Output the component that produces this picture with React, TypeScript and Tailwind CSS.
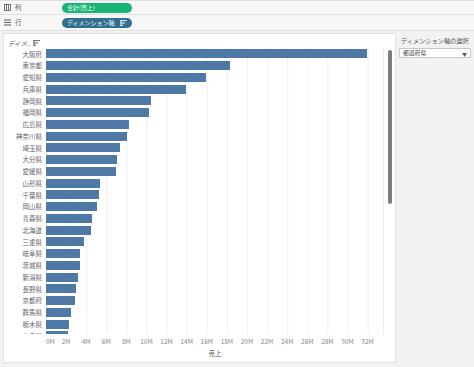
const rows: { name: string; end: number }[] = [
  { name: "大阪府", end: 366 },
  { name: "東京都", end: 229 },
  { name: "愛知県", end: 205 },
  { name: "兵庫県", end: 185 },
  { name: "静岡県", end: 150 },
  { name: "福岡県", end: 148 },
  { name: "広島県", end: 128 },
  { name: "神奈川県", end: 126 },
  { name: "埼玉県", end: 119 },
  { name: "大分県", end: 116 },
  { name: "愛媛県", end: 115 },
  { name: "山形県", end: 99 },
  { name: "千葉県", end: 98 },
  { name: "岡山県", end: 96 },
  { name: "青森県", end: 91 },
  { name: "北海道", end: 90 },
  { name: "三重県", end: 83 },
  { name: "岐阜県", end: 79 },
  { name: "茨城県", end: 79 },
  { name: "新潟県", end: 77 },
  { name: "長野県", end: 75 },
  { name: "京都府", end: 74 },
  { name: "群馬県", end: 70 },
  { name: "栃木県", end: 68 },
  { name: "奈良県", end: 67 },
];

const BAR_START = 45;
const PX_PER_M = 10.05;
const ticks = Array.from({ length: 17 }, (_, i) => i * 2);

function ColumnsIcon() {
  return (
    <svg width="7" height="7" viewBox="0 0 7 7" className="shrink-0">
      <rect x="0.5" y="0.5" width="6" height="6" fill="none" stroke="#777" strokeWidth="1" />
      <line x1="2.5" y1="0.5" x2="2.5" y2="6.5" stroke="#777" strokeWidth="1" />
      <line x1="4.5" y1="0.5" x2="4.5" y2="6.5" stroke="#777" strokeWidth="1" />
    </svg>
  );
}

function RowsIcon() {
  return (
    <svg width="7" height="7" viewBox="0 0 7 7" className="shrink-0">
      <line x1="0" y1="1" x2="7" y2="1" stroke="#666" strokeWidth="1.1" />
      <line x1="0" y1="3.5" x2="7" y2="3.5" stroke="#666" strokeWidth="1.1" />
      <line x1="0" y1="6" x2="7" y2="6" stroke="#666" strokeWidth="1.1" />
    </svg>
  );
}

function SortIcon({ color }: { color: string }) {
  return (
    <svg width="7" height="6" viewBox="0 0 7 6">
      <line x1="0" y1="0.6" x2="7" y2="0.6" stroke={color} strokeWidth="1.1" />
      <line x1="0" y1="3" x2="5" y2="3" stroke={color} strokeWidth="1.1" />
      <line x1="0" y1="5.4" x2="3" y2="5.4" stroke={color} strokeWidth="1.1" />
      <line x1="1.2" y1="0.6" x2="1.2" y2="6" stroke={color} strokeWidth="1.1" />
    </svg>
  );
}

export default function App() {
  return (
    <div
      className="w-[474px] h-[367px] bg-[#f2f2f2] flex flex-col overflow-hidden text-[#333]"
      style={{ fontFamily: '"Noto Sans CJK JP", "Noto Sans", sans-serif' }}
    >
      {/* shelves */}
      <div className="h-[15px] bg-[#f7f7f7] border-y border-[#e0e0e0] flex items-center">
        <div className="w-[62px] flex items-center gap-[4px] pl-[4px] text-[6.5px] text-[#555]">
          <ColumnsIcon />
          <span>列</span>
        </div>
        <div className="w-[70px] h-[10px] rounded-full bg-[#17b378] text-[#f2fbf6] text-[6px] leading-[10px] pl-[5px]">
          合計(売上)
        </div>
      </div>
      <div className="h-[16px] bg-[#f7f7f7] border-b border-[#e0e0e0] flex items-center">
        <div className="w-[62px] flex items-center gap-[4px] pl-[4px] text-[6.5px] text-[#555]">
          <RowsIcon />
          <span>行</span>
        </div>
        <div className="w-[70px] h-[10px] rounded-full bg-[#31708f] text-[#eef4f7] text-[6px] leading-[10px] pl-[5px] pr-[5px] flex items-center justify-between">
          <span>ディメンション軸</span>
          <SortIcon color="#dde8ee" />
        </div>
      </div>

      <div className="flex flex-1 pt-[2px] pb-[4px]">
        {/* main chart panel */}
        <div className="ml-[3px] w-[393px] bg-white border border-[#e2e2e2] relative flex flex-col">
          <div className="h-[14px] flex items-end pl-[4px] gap-[2px] text-[6.5px] italic text-[#666]">
            <span className="leading-[9px]">ディメ..</span>
            <div className="mb-[2px]">
              <SortIcon color="#777" />
            </div>
          </div>

          <div className="relative h-[286px] overflow-hidden">
            <svg className="absolute left-0 top-0" width="380" height="286">
              {ticks.map((t) => (
                <line
                  key={t}
                  x1={BAR_START - 3 + t * PX_PER_M + 0.5}
                  y1="0"
                  x2={BAR_START - 3 + t * PX_PER_M + 0.5}
                  y2="286"
                  stroke="#f0f0f0"
                  strokeWidth="1"
                />
              ))}
              <line x1="379.5" y1="0" x2="379.5" y2="286" stroke="#ededed" strokeWidth="1" />
            </svg>
            {rows.map((r) => (
              <div key={r.name} className="relative h-[11.75px] flex items-center">
                <div className="w-[42px] pr-[4px] text-right text-[6.5px] text-[#666] leading-none whitespace-nowrap">
                  {r.name}
                </div>
                <div
                  className="h-[9px] bg-[#4e79a7]"
                  style={{ width: r.end - BAR_START }}
                />
              </div>
            ))}
          </div>

          <div className="relative h-[13px] text-[6.5px] text-[#888]">
            {ticks.map((t) => (
              <span
                key={t}
                className="absolute top-[4px] leading-none"
                style={
                  t === 0
                    ? { left: BAR_START - 3 }
                    : { left: BAR_START - 3 + t * PX_PER_M, transform: "translateX(-50%)" }
                }
              >
                {t}M
              </span>
            ))}
          </div>
          <div className="flex pl-[42px] w-[380px]">
            <div className="flex-1 text-center text-[6.5px] text-[#555] leading-none pt-[3px]">
              売上
            </div>
          </div>

          {/* scrollbar */}
          <div className="absolute left-[384px] top-[16px] w-[4px] h-[154px] rounded-full bg-[#7d7d7d]" />
        </div>

        {/* right panel */}
        <div className="flex-1 px-[3px] pt-[5px]">
          <div className="text-[6.2px] text-[#555] leading-none pl-[2px] whitespace-nowrap">
            ディメンション軸の選択
          </div>
          <div className="mt-[4px] h-[10px] bg-white border border-[#c8c8c8] rounded-[1px] flex items-center justify-between px-[3px]">
            <span className="text-[5.8px] text-[#444] leading-none">都道府県</span>
            <span className="text-[5px] text-[#555] leading-none">▼</span>
          </div>
        </div>
      </div>
    </div>
  );
}
